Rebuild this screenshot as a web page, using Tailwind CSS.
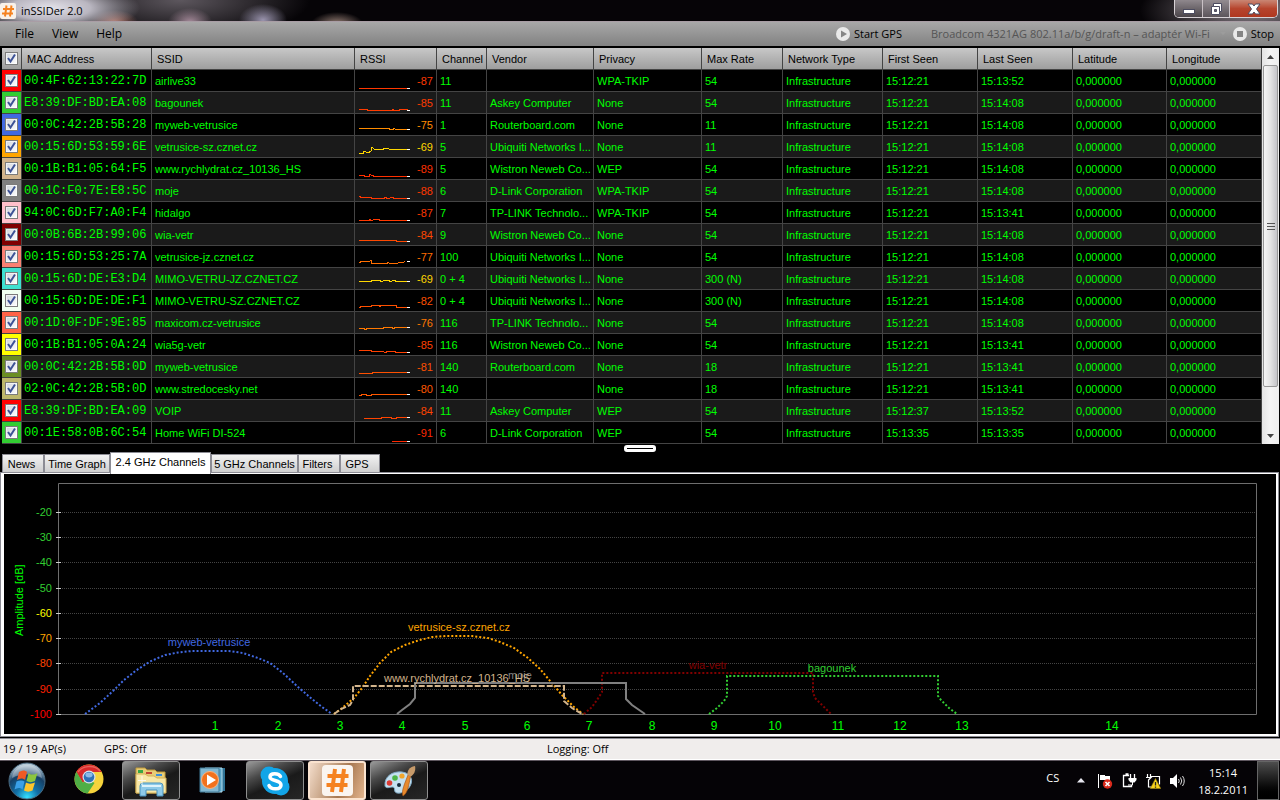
<!DOCTYPE html>
<html lang="en">
<head>
<meta charset="utf-8">
<title>inSSIDer 2.0</title>
<script src="https://cdn.jsdelivr.net/npm/@tailwindcss/browser@4"></script>
</head>
<body class="flex min-h-screen flex-col overflow-x-hidden bg-black font-['Liberation_Sans',sans-serif] text-[11px] leading-[14px] text-black">

<header class="flex h-[22px] shrink-0 items-start justify-between border-b border-[#a99da5] bg-[radial-gradient(ellipse_90px_26px_at_50px_8px,#e4e2ea_0%,#b9b6c0_45%,transparent_100%),radial-gradient(ellipse_24px_12px_at_114px_22px,#b5786a,transparent),radial-gradient(ellipse_22px_14px_at_190px_22px,#a58a9a,transparent),radial-gradient(ellipse_24px_16px_at_263px_20px,#9a94ae,transparent),radial-gradient(ellipse_26px_12px_at_337px_24px,#9a8278,transparent),radial-gradient(ellipse_130px_40px_at_180px_0px,#5d575e,transparent),radial-gradient(ellipse_110px_40px_at_1250px_10px,#8a8088,transparent),linear-gradient(#060407,#060407)]">
  <div class="flex items-center gap-[5px] pt-[3px]">
    <svg class="h-4 w-4" viewBox="0 0 16 16" role="img" aria-label="inSSIDer"><rect width="16" height="16" rx="2" fill="#f8f1ea"/><path d="M6.500 2.500 5 13.500M11.500 2.500 10 13.500M3 6h11M2 10.500h11" stroke="#f58220" stroke-width="2"/></svg>
    <h1 class="font-['Open_Sans',sans-serif] text-[11px] leading-4">inSSIDer 2.0</h1>
  </div>
  <div class="mr-[2px] flex h-[18px] rounded-b-[5px] border border-t-0 border-[#d8d2d6]">
    <button aria-label="Minimize" class="grid w-[28px] place-items-center rounded-bl border-r border-[#c9c1c6] bg-gradient-to-b from-[#8f888d] to-[#4c464b]"><svg class="h-[14px] w-4" viewBox="0 0 16 14"><rect x="2.500" y="7.500" width="11" height="4" fill="#fff" stroke="#4c4c60"/></svg></button>
    <button aria-label="Restore" class="grid w-[27px] place-items-center border-r border-[#c9c1c6] bg-gradient-to-b from-[#938c91] to-[#5c555b]"><svg class="h-[14px] w-4" viewBox="0 0 16 14"><path d="M5.500 1.500h8v8h-2v3h-8v-8h2z" fill="#fff" stroke="#4c4c60"/><path d="M6.500 7.500h2v2h-2z" fill="#6b6570" stroke="#4c4c60"/><path d="M11.500 9.500v-5h-6" fill="none" stroke="#4c4c60"/></svg></button>
    <button aria-label="Close" class="grid w-[47px] place-items-center rounded-br bg-gradient-to-b from-[#c98674] via-[#b6452e] to-[#b0371f]"><svg class="h-[14px] w-4" viewBox="0 0 16 14"><path d="M2 2h4.500L8 4 9.500 2H14l-3.500 5L14 12H9.500L8 10l-1.500 2H2l3.500-5z" fill="#fff" stroke="#4c4c60"/></svg></button>
  </div>
</header>

<div class="flex h-6 shrink-0 items-center justify-between bg-gradient-to-b from-[#a8a8a8] to-[#828282] font-['Open_Sans',sans-serif] text-[12px]">
  <nav class="flex gap-[18px] pl-[15px]" aria-label="Menu">
    <button>File</button><button>View</button><button>Help</button>
  </nav>
  <div class="flex items-center pr-[6px] text-[11px]">
    <button class="flex items-center gap-[4px]"><svg class="h-[14px] w-[14px]" viewBox="0 0 14 14"><circle cx="7" cy="7" r="7" fill="#e9e9e9"/><path d="M5 3.500 11 7l-6 3.500z" fill="#858585"/></svg>Start GPS</button>
    <button class="ml-[29px] text-[#555]" disabled>Broadcom 4321AG 802.11a/b/g/draft-n – adaptér Wi-Fi</button>
    <svg class="ml-[10px] h-[4px] w-[6px]" viewBox="0 0 6 4"><path d="M0 0h6L3 3z" fill="#9c9c9c"/></svg>
    <button class="ml-[7px] flex items-center gap-[4px]"><svg class="h-[14px] w-[14px]" viewBox="0 0 14 14"><circle cx="7" cy="7" r="7" fill="#e9e9e9"/><path d="M4 4h6v6H4z" fill="#858585"/></svg>Stop</button>
  </div>
</div>

<main class="flex flex-1 flex-col pt-[2px]">
  <div class="flex">
    <table class="ml-[2px] w-full table-fixed border-separate border-spacing-0 whitespace-nowrap">
      <colgroup>
        <col class="w-[20px]"><col class="w-[130px]"><col class="w-[203px]"><col class="w-[82px]"><col class="w-[50px]"><col class="w-[107px]"><col class="w-[108px]"><col class="w-[81px]"><col class="w-[100px]"><col class="w-[95px]"><col class="w-[95px]"><col class="w-[94px]"><col class="w-[95px]">
      </colgroup>
      <thead><tr id="head"></tr></thead>
      <tbody id="rows" class="text-[#00ff00]"></tbody>
    </table>
    <div class="mr-px flex w-[17px] shrink-0 flex-col items-center bg-gradient-to-r from-[#e4e4e4] via-[#f4f4f4] to-[#eeeeee]">
      <button aria-label="Scroll up" class="grid h-[17px] w-full place-items-center"><svg class="h-[4px] w-[7px]" viewBox="0 0 7 4"><path d="M3.500 0 7 4H0z" fill="#444"/></svg></button>
      <div class="flex h-[322px] w-[15px] flex-col items-center justify-center gap-[2px] rounded-[2px] border border-[#979797] bg-gradient-to-r from-[#f5f5f5] via-[#e3e3e3] to-[#c4c4c8]">
        <i class="h-px w-[8px] bg-[#555]"></i><i class="h-px w-[8px] bg-[#555]"></i><i class="h-px w-[8px] bg-[#555]"></i>
      </div>
      <button aria-label="Scroll down" class="mt-auto grid h-[17px] w-full place-items-center"><svg class="h-[4px] w-[7px]" viewBox="0 0 7 4"><path d="M3.500 4 7 0H0z" fill="#444"/></svg></button>
    </div>
  </div>

  <div class="flex h-[8px] items-center justify-center"><div class="h-[7px] w-[32px] rounded-[3px] border-[3px] border-white bg-black"></div></div>

  <div role="tablist" class="flex h-5 items-end pl-[2px]">
    <button role="tab" class="h-[18px] w-[42px] border border-b-0 border-[#8c8c94] bg-gradient-to-b from-[#f2f2f2] to-[#cfcfcf] pr-[3px]">News</button>
    <button role="tab" class="h-[18px] w-[66px] border border-b-0 border-[#8c8c94] bg-gradient-to-b from-[#f2f2f2] to-[#cfcfcf]">Time Graph</button>
    <button role="tab" aria-selected="true" class="z-10 -mb-[2px] h-[22px] w-[101px] border border-b-0 border-[#8c8c94] bg-white pb-[3px]">2.4 GHz Channels</button>
    <button role="tab" class="h-[18px] w-[87px] border border-b-0 border-[#8c8c94] bg-gradient-to-b from-[#f2f2f2] to-[#cfcfcf]">5 GHz Channels</button>
    <button role="tab" class="h-[18px] w-[42px] border border-b-0 border-[#8c8c94] bg-gradient-to-b from-[#f2f2f2] to-[#cfcfcf] pr-[3px]">Filters</button>
    <button role="tab" class="h-[18px] w-[40px] border border-b-0 border-[#8c8c94] bg-gradient-to-b from-[#f2f2f2] to-[#cfcfcf] pr-[6px]">GPS</button>
  </div>

  <section role="tabpanel" aria-label="2.4 GHz Channels" class="mr-px flex flex-1 flex-col border border-[#8c8c94] bg-white pt-px pr-[2px] pb-[2px] pl-[3px]">
    <svg class="block w-full flex-1 bg-black text-[11px]" viewBox="4 474 1272 260">
      <g id="grid"></g>
      <path d="M58.500 714.500V483.500H1256.500V714.500H58.500" fill="none" stroke="#6e6e6e"/>
      <g id="ticks"></g>
      <text transform="translate(23 636) rotate(-90)" fill="#00ff00">Amplitude [dB]</text>
      <g fill="none" stroke-width="2">
        <path stroke="#4169e1" stroke-dasharray="2 2" d="M85 714 100 703 113 691 124 680 136 670.500 150 661.500 165 655 178 652.500 192 651H229L243 653 258 658 270 663 283 673 298 687 312 699 322 707 332 714"/>
        <path stroke="#ffa500" stroke-dasharray="2 2" d="M334 714 341 709 354 698 362 688 370 676 380 663 391 652 405 645 418 640.500 432 637 446 636H472L488 638 500 642 514 648 528 658 540 669 551 682 562 695 574 707 583 714"/>
        <path stroke="#800000" stroke-dasharray="2 2" d="M584 714 592 707 599 697 602 692V673H813V692L815 698 823 706 831 714"/>
        <path stroke="#32cd32" stroke-dasharray="2 2" d="M709 714 717 708 724 701 727 696V676H938V696L941 700 949 708 957 714"/>
        <path stroke="#d2b48c" stroke-dasharray="6 2" d="M334 714 341 709 350 705 353 700V686H564V701L572 708 582 714"/>
        <path stroke="#808080" d="M397 714 402 710 410 704 415 698V683H626V699L632 705 645 714"/>
      </g>
      <g text-anchor="middle">
        <text x="209" y="646" fill="#4169e1">myweb-vetrusice</text>
        <text x="459" y="631" fill="#ffa500">vetrusice-sz.cznet.cz</text>
        <text x="520" y="679" fill="#808080">moje</text>
        <text x="457" y="682" fill="#d2b48c">www.rychlydrat.cz_10136_HS</text>
        <text x="708" y="669" fill="#800000">wia-vetr</text>
        <text x="832" y="672" fill="#32cd32">bagounek</text>
      </g>
      <g id="channels" text-anchor="middle" fill="#00ff00"></g>
    </svg>
  </section>
</main>

<footer class="mt-px grid h-[22px] shrink-0 grid-cols-[104px_443px_1fr] items-center border-t border-b border-t-[#8c8c94] border-b-white bg-[#f0edec] font-['Open_Sans',sans-serif]">
  <span class="pl-[3px]">19 / 19 AP(s)</span><span>GPS: Off</span><span>Logging: Off</span>
</footer>

<div class="flex h-10 shrink-0 items-stretch justify-between border-t border-[#5f575f] bg-[#050306] font-['Open_Sans',sans-serif] text-white">
  <div class="flex gap-1">
    <button aria-label="Start" class="grid w-[56px] place-items-center pr-[2px]">
      <svg class="h-[38px] w-[38px]" viewBox="0 0 38 38">
        <defs><radialGradient id="orb" cx=".5" cy=".95" r=".9"><stop offset="0" stop-color="#35e2ff"/><stop offset=".35" stop-color="#1271a8"/><stop offset=".7" stop-color="#164066"/><stop offset="1" stop-color="#b8cbd8"/></radialGradient></defs>
        <circle cx="19" cy="19" r="18" fill="url(#orb)" stroke="#4a6a80"/>
        <path d="M4 16C5 7 12 3 19 3s14 4 15 13c-8-4-20-5-30 0z" fill="#fff" opacity=".3"/>
        <path d="M11 10c3-2 6-2 8 0l-2 8c-2-2-5-2-8 0z" fill="#ef5a24"/><path d="M20.500 11c2 2 6 2 9 0l-2.500 8c-3 1.500-6 1.500-8.500 0z" fill="#8cc63e"/><path d="M8.500 19.500c3-1.500 6-1.500 8 0l-2 8c-2-2-5-2-8 0z" fill="#3aa0e8"/><path d="M18 20.500c2 1.500 6 1.500 9 0l-2.500 8c-3 1.500-6 1.500-8.500 0z" fill="#fdc52c"/>
      </svg>
    </button>
    <button aria-label="Google Chrome" class="grid w-[58px] place-items-center pb-[3px]">
      <svg class="h-[30px] w-[30px]" viewBox="0 0 30 30">
        <circle cx="15" cy="15" r="14.500" fill="#f6d33c"/>
        <path d="M15 15 8.500 18.500 2.300 7.900A14.500 14.500 0 0 1 27.700 8H15z" fill="#d8292a"/>
        <path d="M2.400 7.800A14.500 14.500 0 0 0 13.500 29.400L20.500 19 15 15 8.800 18.500z" fill="#4fae45"/>
        <path d="M4 8C8 2 20 0 26 7" stroke="#f58b7c" stroke-width="1.500" fill="none" opacity=".6"/>
        <circle cx="15" cy="13" r="6.500" fill="#d9e2ea"/><circle cx="15" cy="13" r="5.300" fill="#2f72b8"/><ellipse cx="15" cy="11" rx="3.600" ry="2.400" fill="#8dbbe6"/>
      </svg>
    </button>
    <button aria-label="Windows Explorer" class="grid w-[58px] place-items-center rounded-[3px] border border-[#8f8f8f] bg-[linear-gradient(155deg,#9a9a9a_0%,#4a4a4a_30%,#1a1a1a_55%,#262626_100%)]">
      <svg class="h-[32px] w-[34px]" viewBox="0 0 34 32">
        <path d="M2 3h9l2 2h8l2 2h8v21H2z" fill="#e7cd77" stroke="#c19b3b"/><path d="M4 5h5v3H4z" fill="#39a845"/><path d="M12 7h6v2h-6z" fill="#c44334"/><path d="M22 9h6v2h-6z" fill="#3a8ede"/>
        <path d="M2 9h9l3 2h6l3 2h9v15H2z" fill="#f8e8a8" stroke="#d3b158"/>
        <path d="M6 31V21q0-3 3-3h17q3 0 3 3v10h-6v-6H12v6z" fill="#8ecae8" stroke="#4b93bd"/><path d="M8 20h19v2H8z" fill="#dff3fb"/>
        <path d="M8 11v9M4 15.500h8" stroke="#fff" opacity=".8"/>
      </svg>
    </button>
    <button aria-label="Windows Media Player" class="grid w-[58px] place-items-center pb-[2px]">
      <svg class="h-[26px] w-[28px]" viewBox="0 0 28 26">
        <path d="M8 1h18v23H8z" fill="#2f7396"/><path d="M6 1h17v24H6z" fill="#5aa5c8" stroke="#b5dcec"/><path d="M1 1h19v24H1z" fill="#83b8d1" stroke="#3f7896"/>
        <circle cx="11" cy="13" r="8.500" fill="#f2711c" stroke="#fbb27c"/><path d="M8 7.500 17 13l-9 5.500z" fill="#fff"/>
      </svg>
    </button>
    <button aria-label="Skype" class="grid w-[58px] place-items-center rounded-[3px] border border-[#8f8f8f] bg-[linear-gradient(155deg,#9a9a9a_0%,#4a4a4a_30%,#1a1a1a_55%,#262626_100%)]">
      <svg class="h-[32px] w-[32px]" viewBox="0 0 32 32">
        <circle cx="10" cy="10" r="8.500" fill="#12a5e8"/><circle cx="22" cy="22" r="8.500" fill="#12a5e8"/><circle cx="16" cy="16" r="13" fill="#12a5e8"/>
        <path d="M21.500 11.500C20 8 11 7.500 11 12c0 4.500 11 2.500 11 8 0 5-10 5-12 .5" fill="none" stroke="#fff" stroke-width="3.500" stroke-linecap="round"/>
      </svg>
    </button>
    <button aria-label="inSSIDer" class="grid w-[58px] place-items-center rounded-[3px] border-2 border-[#fbe3cf] bg-[linear-gradient(110deg,#f3dcca_0%,#c8a587_35%,#a77851_60%,#e3b48d_100%)]">
      <svg class="h-[31px] w-[31px]" viewBox="0 0 31 31"><rect width="31" height="31" rx="4" fill="#faf5f0"/><path d="M13 4 10 27M22 4 19 27M5.500 11h21M4.500 20h21" stroke="#f58220" stroke-width="4"/></svg>
    </button>
    <button aria-label="Paint" class="grid w-[58px] place-items-center rounded-[3px] border border-[#8f8f8f] bg-[linear-gradient(155deg,#9a9a9a_0%,#4a4a4a_30%,#1a1a1a_55%,#262626_100%)]">
      <svg class="h-[32px] w-[34px]" viewBox="0 0 34 32">
        <path d="M3 21C2 11 11 6 20 7c8 1 11 7 9 12-2 6-9 10-14 9-4-1-1-5-4-6-3 0-7 2-8-1z" fill="#c4e0f0" stroke="#7fa9c4"/>
        <circle cx="7.500" cy="18" r="2.800" fill="#dc3b34"/><circle cx="13" cy="13" r="2.800" fill="#4eb648"/><circle cx="20" cy="11" r="2.600" fill="#f0a52b"/><circle cx="17" cy="20" r="2" fill="#162a3a"/>
        <path d="M21 31C19 26 23 18 26 10l2.500 1C27 19 26 28 21 31z" fill="#e78a2d" stroke="#a8571a" stroke-width=".7"/><path d="M25.500 10C25 6 27 2 33 1c1 5-1 8-4 10.500z" fill="#c69a6a"/>
      </svg>
    </button>
  </div>
  <div class="flex items-center">
    <span class="mr-[18px] pb-[6px]">CS</span>
    <button aria-label="Show hidden icons" class="mr-[12px]"><svg class="h-[5px] w-[8px]" viewBox="0 0 8 5"><path d="M4 0 8 4.500H0z" fill="#e8e8f0"/></svg></button>
    <svg class="mr-[8px] h-4 w-4" viewBox="0 0 16 16" role="img" aria-label="Action Center"><path d="M1.500 1v14" stroke="#fff"/><path d="M3 2h5v1h5v5H8V7H3z" fill="#fff"/><circle cx="10.500" cy="11" r="4.700" fill="#d92a1c"/><path d="m8.500 9 4 4m0-4-4 4" stroke="#fff" stroke-width="1.600"/></svg>
    <svg class="mr-[8px] h-4 w-4" viewBox="0 0 16 16" role="img" aria-label="Power"><path d="M8 2.500H2.500v11h8V12M4.500 1h3" fill="none" stroke="#fff" stroke-width="1.300"/><path d="M9.500 1v4m4-4v4" stroke="#fff" stroke-width="1.300"/><path d="M7.500 5h8v2l-2 2.500h-4L7.500 7z" fill="#fff"/><path d="M11.500 9v3H7" stroke="#fff" fill="none"/></svg>
    <svg class="mr-[8px] h-4 w-4" viewBox="0 0 16 16" role="img" aria-label="Network"><path d="M5 3.500h9.500v8M2.500 1v3m3-3v3M1 4.500h5L3.500 7v7H8" fill="none" stroke="#fff" stroke-width="1.200"/><path d="m10.500 5.500 5.200 10H5.300z" fill="#f7d21c" stroke="#a08510" stroke-width=".6"/><path d="M10.500 9v3.500m0 1v1.200" stroke="#222" stroke-width="1.300"/></svg>
    <svg class="mr-[13px] h-4 w-4" viewBox="0 0 16 16" role="img" aria-label="Volume"><path d="M1 5h3l4-4v14l-4-4H1z" fill="#fff"/><path d="M9.500 6q1.500 2 0 4M11.500 4.500q2.500 3.500 0 7M13.500 3q3.500 5 0 10" fill="none" stroke="#ddd"/></svg>
    <div class="mr-[9px] text-center leading-[17px]"><div>15:14</div><div>18.2.2011</div></div>
    <button aria-label="Show desktop" class="mr-px h-full w-[22px] border border-[#656565] bg-gradient-to-b from-[#4e4e4e] via-[#1a1a1a] to-black"></button>
  </div>
</div>

<script>
const tick = '<svg class="pointer-events-none absolute h-[13px] w-[13px]" viewBox="0 0 13 13"><path d="M3 6 5.500 9.500 10 2.500" fill="none" stroke="#3d5296" stroke-width="2"/></svg>';
const box = name => `<label class="relative grid h-[21px] place-items-center"><input type="checkbox" checked aria-label="${name}" class="h-[13px] w-[13px] appearance-none border border-[#7c7c7c] bg-gradient-to-br from-[#d0d4dc] to-white ring-1 ring-white/60 ring-inset">${tick}</label>`;

const heads = ['MAC Address','SSID','RSSI','Channel','Vendor','Privacy','Max Rate','Network Type','First Seen','Last Seen','Latitude','Longitude'];
document.getElementById('head').innerHTML =
  `<th class="h-[22px] border-r border-b border-[#444] bg-gradient-to-b from-[#c8c8c8] to-[#9e9e9e] p-0">${box('Select all')}</th>` +
  heads.map(h => `<th scope="col" class="h-[22px] border-r border-b border-[#444] bg-gradient-to-b from-[#c8c8c8] to-[#9e9e9e] p-0 pl-[5px] text-left font-normal">${h}</th>`).join('');

// colour, MAC, SSID, RSSI, RSSI colour, sparkline, channel, vendor, privacy, rate, first seen, last seen
const UB = 'Ubiquiti Networks I...', WN = 'Wistron Neweb Co...', TP = 'TP-LINK Technolo...';
const data = [
  ['#ff0000','00:4F:62:13:22:7D','airlive33',-87,'#ff3800','0,18 48,18','11','','WPA-TKIP','54','15:12:21','15:13:52'],
  ['#32cd32','E8:39:DF:BD:EA:08','bagounek',-85,'#ff3c00','0,17 8,17 8,18 33,18 33,17 36,18 40,18 41,17 48,17 48,18','11','Askey Computer','None','54','15:12:21','15:14:08'],
  ['#4169e1','00:0C:42:2B:5B:28','myweb-vetrusice',-75,'#ff8c00','0,14 30,14 31,15 34,15 35,14 37,15 48,15','1','Routerboard.com','None','11','15:12:21','15:14:08'],
  ['#ffa500','00:15:6D:53:59:6E','vetrusice-sz.cznet.cz',-69,'#ffd700','0,17 4,17 5,15 9,16 12,15 13,11 16,13 24,13 25,12 34,13 48,13','5',UB,'None','11','15:12:21','15:14:08'],
  ['#d2b48c','00:1B:B1:05:64:F5','www.rychlydrat.cz_10136_HS',-89,'#ff3000','0,17 5,17 6,18 10,18 10,16 14,17 15,18 48,18','5',WN,'WEP','54','15:12:21','15:14:08'],
  ['#808080','00:1C:F0:7E:E8:5C','moje',-88,'#ff3800','0,16 3,17 12,17 13,18 25,18 26,17 29,18 33,17 36,18 48,18','6','D-Link Corporation','WPA-TKIP','54','15:12:21','15:14:08'],
  ['#ffc0cb','94:0C:6D:F7:A0:F4','hidalgo',-87,'#ff3800','0,18 10,18 10,17 13,18 15,17 20,17 21,18 48,18','7',TP,'WPA-TKIP','54','15:12:21','15:13:41'],
  ['#800000','00:0B:6B:2B:99:06','wia-vetr',-84,'#ff4800','0,16 37,16 38,17 48,17','9',WN,'None','54','15:12:21','15:14:08'],
  ['#fa8072','00:15:6D:53:25:7A','vetrusice-jz.cznet.cz',-77,'#ff6e00','0,16 3,15 10,15 12,14 13,17 28,17 29,16 31,17 38,17 40,16 44,16 46,15','100',UB,'None','54','15:12:21','15:14:08'],
  ['#40e0d0','00:15:6D:DE:E3:D4','MIMO-VETRU-JZ.CZNET.CZ',-69,'#ffd700','0,13 12,13 13,12 21,12 22,13 26,12 30,12 31,13 35,12 38,13 48,13','0 + 4',UB,'None','300 (N)','15:12:21','15:14:08'],
  ['#f0fff0','00:15:6D:DE:DE:F1','MIMO-VETRU-SZ.CZNET.CZ',-82,'#ff5000','0,17 3,16 12,16 13,15 20,15 21,16 22,15 37,15 38,17 48,17','0 + 4',UB,'None','300 (N)','15:12:21','15:14:08'],
  ['#ff6347','00:1D:0F:DF:9E:85','maxicom.cz-vetrusice',-76,'#ff7800','0,16 5,16 6,17 9,16 24,16 25,15 33,15 34,16 37,15 48,15','116',TP,'None','54','15:12:21','15:14:08'],
  ['#ffff00','00:1B:B1:05:0A:24','wia5g-vetr',-85,'#ff4000','0,16 12,16 13,17 24,17 26,18 29,17 36,17 37,18 48,18','116',WN,'None','54','15:12:21','15:13:41'],
  ['#6b8e23','00:0C:42:2B:5B:0D','myweb-vetrusice',-81,'#ff5000','0,17 13,17 14,16 48,16','140','Routerboard.com','None','18','15:12:21','15:13:41'],
  ['#bdb76b','02:0C:42:2B:5B:0D','www.stredocesky.net',-80,'#ff5800','0,17 2,17 3,16 7,16 8,17 12,17 13,16 48,16','140','','None','18','15:12:21','15:13:41'],
  ['#ff0000','E8:39:DF:BD:EA:09','VOIP',-84,'#ff4400','5,18 22,18 23,17 32,17 33,18 37,18 38,17 48,17','11','Askey Computer','WEP','54','15:12:37','15:13:52'],
  ['#32cd32','00:1E:58:0B:6C:54','Home WiFi DI-524',-91,'#ff2800','33,19 48,19','6','D-Link Corporation','WEP','54','15:13:35','15:13:35'],
];
const cell = t => `<td class="h-[22px] border-r border-b border-[#444] p-0 pl-[3px]">${t}</td>`;
document.getElementById('rows').innerHTML = data.map(([c, mac, ssid, rssi, rc, pts, ch, vendor, priv, rate, first, last]) => {
  const y = pts.split(',').pop();
  const spark = `<svg class="ml-[4px] h-[21px] w-[52px]" viewBox="0 0 52 21" shape-rendering="crispEdges"><polyline points="${pts}" transform="translate(0 .5)" fill="none" stroke="${rc}"/><path d="M48 ${y}.500h3" stroke="#fff"/></svg>`;
  return `<tr class="bg-black even:bg-[#1a1a1a]">
    <td class="h-[22px] border-r border-b border-[#444] p-0" style="background:${c}">${box(ssid)}</td>
    <td class="h-[22px] border-r border-b border-[#444] p-0 pl-[2px] font-['Liberation_Mono',monospace] text-[12px]">${mac}</td>
    ${cell(ssid)}
    <td class="h-[22px] border-r border-b border-[#444] p-0"><div class="flex h-[21px] items-center justify-between pr-[3px]">${spark}<span style="color:${rc}">${rssi}</span></div></td>
    ${[ch, vendor, priv, rate, 'Infrastructure', first, last, '0,000000', '0,000000'].map(cell).join('')}
  </tr>`;
}).join('');

const levels = [[-20,512,'#32cd32'],[-30,537,'#32cd32'],[-40,562,'#32cd32'],[-50,588,'#32cd32'],[-60,613,'#ffff00'],[-70,638,'#ffa500'],[-80,663,'#ff4500'],[-90,689,'#ff2000'],[-100,714,'#ff0000']];
document.getElementById('grid').innerHTML = levels.slice(0, -1).map(([, y]) => `<path d="M62 ${y}.500H1256" stroke="#444" stroke-dasharray="1 1"/>`).join('');
document.getElementById('ticks').innerHTML = levels.map(([v, y, c]) => `<path d="M56 ${y}.500h5" stroke="#ccc"/><text x="52" y="${y + 4}" text-anchor="end" fill="${c}">${v}</text>`).join('');
document.getElementById('channels').innerHTML = [215,278,340,402,465,527,589,652,714,775,838,900,962,1112].map((x, i) => `<text x="${x}" y="730" font-size="12">${i + 1}</text>`).join('');
</script>
</body>
</html>
